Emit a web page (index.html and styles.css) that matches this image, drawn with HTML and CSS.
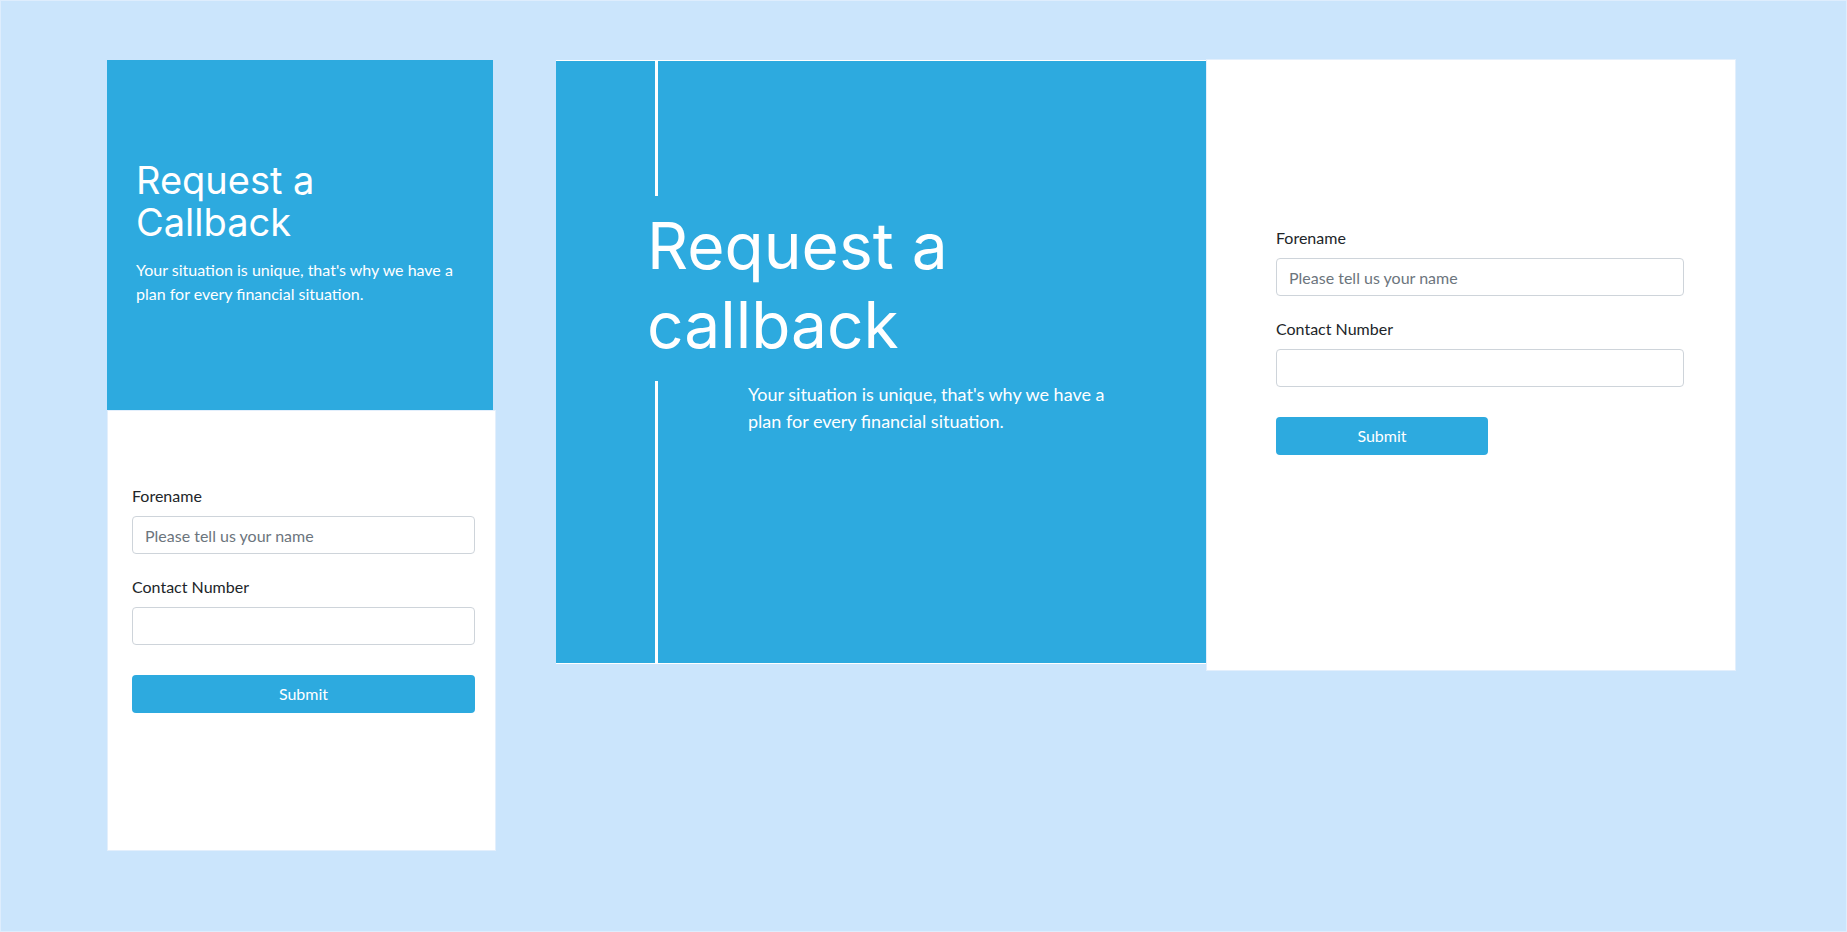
FILE: index.html
```html
<!DOCTYPE html>
<html lang="en">
<head>
<meta charset="utf-8">
<title>Request a Callback</title>
<link rel="stylesheet" href="styles.css">
</head>
<body>
<div class="page">
  <div class="row">
    <section class="card-small">
      <div class="small-head">
        <h2 class="small-title">Request a Callback</h2>
        <p class="small-text">Your situation is unique, that's why we have a plan for every financial situation.</p>
      </div>
      <form class="small-form">
        <div class="form-group">
          <label class="form-label">Forename</label>
          <input class="form-control" type="text" placeholder="Please tell us your name">
        </div>
        <div class="form-group">
          <label class="form-label">Contact Number</label>
          <input class="form-control" type="text">
        </div>
        <button class="btn btn-full" type="button">Submit</button>
      </form>
    </section>

    <section class="hero">
      <div class="hero-line"></div>
      <h1 class="hero-title">Request a callback</h1>
      <div class="hero-body">
        <p class="hero-text">Your situation is unique, that's why we have a plan for every financial situation.</p>
      </div>
    </section>
    <section class="hero-form-panel">
      <form class="hero-form">
        <div class="form-group">
          <label class="form-label">Forename</label>
          <input class="form-control" type="text" placeholder="Please tell us your name">
        </div>
        <div class="form-group">
          <label class="form-label">Contact Number</label>
          <input class="form-control" type="text">
        </div>
        <button class="btn btn-half" type="button">Submit</button>
      </form>
    </section>
  </div>
</div>
</body>
</html>
```

FILE: styles.css
```css
* { box-sizing: border-box; }

html, body {
  margin: 0;
  padding: 0;
}

body {
  font-family: "Lato", "Open Sans", sans-serif;
  font-size: 16px;
  line-height: 1.5;
  color: #212529;
  background: #cbe5fc;
}

.page {
  height: 932px;
  border: 1px solid #deedfd;
  background: #cbe5fc;
  padding: 58px 0 0 106px;
}

.row {
  display: flex;
  align-items: flex-start;
}

/* ---------- left small card ---------- */
.card-small {
  width: 389px;
  margin-top: 1px;
  display: flex;
  flex-direction: column;
}

.small-head {
  width: 386px;
  height: 350px;
  background: #2daadf;
  color: #fff;
  padding: 99px 29px 0 29px;
}

.small-title {
  font-family: "Inter", "Open Sans", sans-serif;
  font-weight: 400;
  font-size: 38px;
  line-height: 42px;
  margin: 0 0 15px 0;
  max-width: 250px;
}

.small-text {
  margin: 0;
  font-size: 16px;
  line-height: 24px;
}

.small-form {
  width: 389px;
  height: 441px;
  background: #fff;
  border: 1px solid #e3effc;
  padding: 73px 20px 0 24px;
}

/* ---------- forms ---------- */
.form-group {
  margin-bottom: 21px;
}

.form-label {
  display: block;
  font-size: 16px;
  line-height: 24px;
  margin-bottom: 8px;
  color: #212529;
}

.form-control {
  display: block;
  width: 100%;
  height: 38px;
  padding: 6px 12px;
  font-family: "Lato", "Open Sans", sans-serif;
  font-size: 16px;
  line-height: 24px;
  color: #495057;
  background: #fff;
  border: 1px solid #ced4da;
  border-radius: 4px;
  outline: none;
}

.form-control::placeholder {
  color: #6c757d;
  opacity: 1;
}

.btn {
  display: block;
  height: 38px;
  margin-top: 30px;
  border: none;
  border-radius: 4px;
  background: #2daadf;
  color: #fff;
  font-family: "Lato", "Open Sans", sans-serif;
  font-size: 16px;
  line-height: 24px;
  cursor: pointer;
}

.btn-full { width: 100%; }
.btn-half { width: 212px; }

/* ---------- hero ---------- */
.hero {
  width: 650px;
  height: 604px;
  margin-left: 60px;
  margin-top: 1px;
  background: #2daadf;
  border-top: 1px solid #fff;
  border-bottom: 1px solid #fff;
  display: flex;
  flex-direction: column;
  color: #fff;
}

.hero-line {
  width: 3px;
  height: 135px;
  margin-left: 99px;
  background: #fff;
  flex: none;
}

.hero-title {
  font-family: "Inter", "Open Sans", sans-serif;
  font-weight: 400;
  font-size: 64px;
  line-height: 79px;
  margin: 10px 0 17px 91px;
  max-width: 420px;
}

.hero-body {
  flex: 1;
  margin-left: 99px;
  border-left: 3px solid #fff;
  padding-left: 90px;
}

.hero-text {
  margin: 0;
  font-size: 18px;
  line-height: 27px;
  max-width: 372px;
}

.hero-form-panel {
  width: 530px;
  height: 612px;
  background: #fff;
  border: 1px solid #e3effc;
}

.hero-form {
  width: 408px;
  margin: 166px 0 0 69px;
}
```
